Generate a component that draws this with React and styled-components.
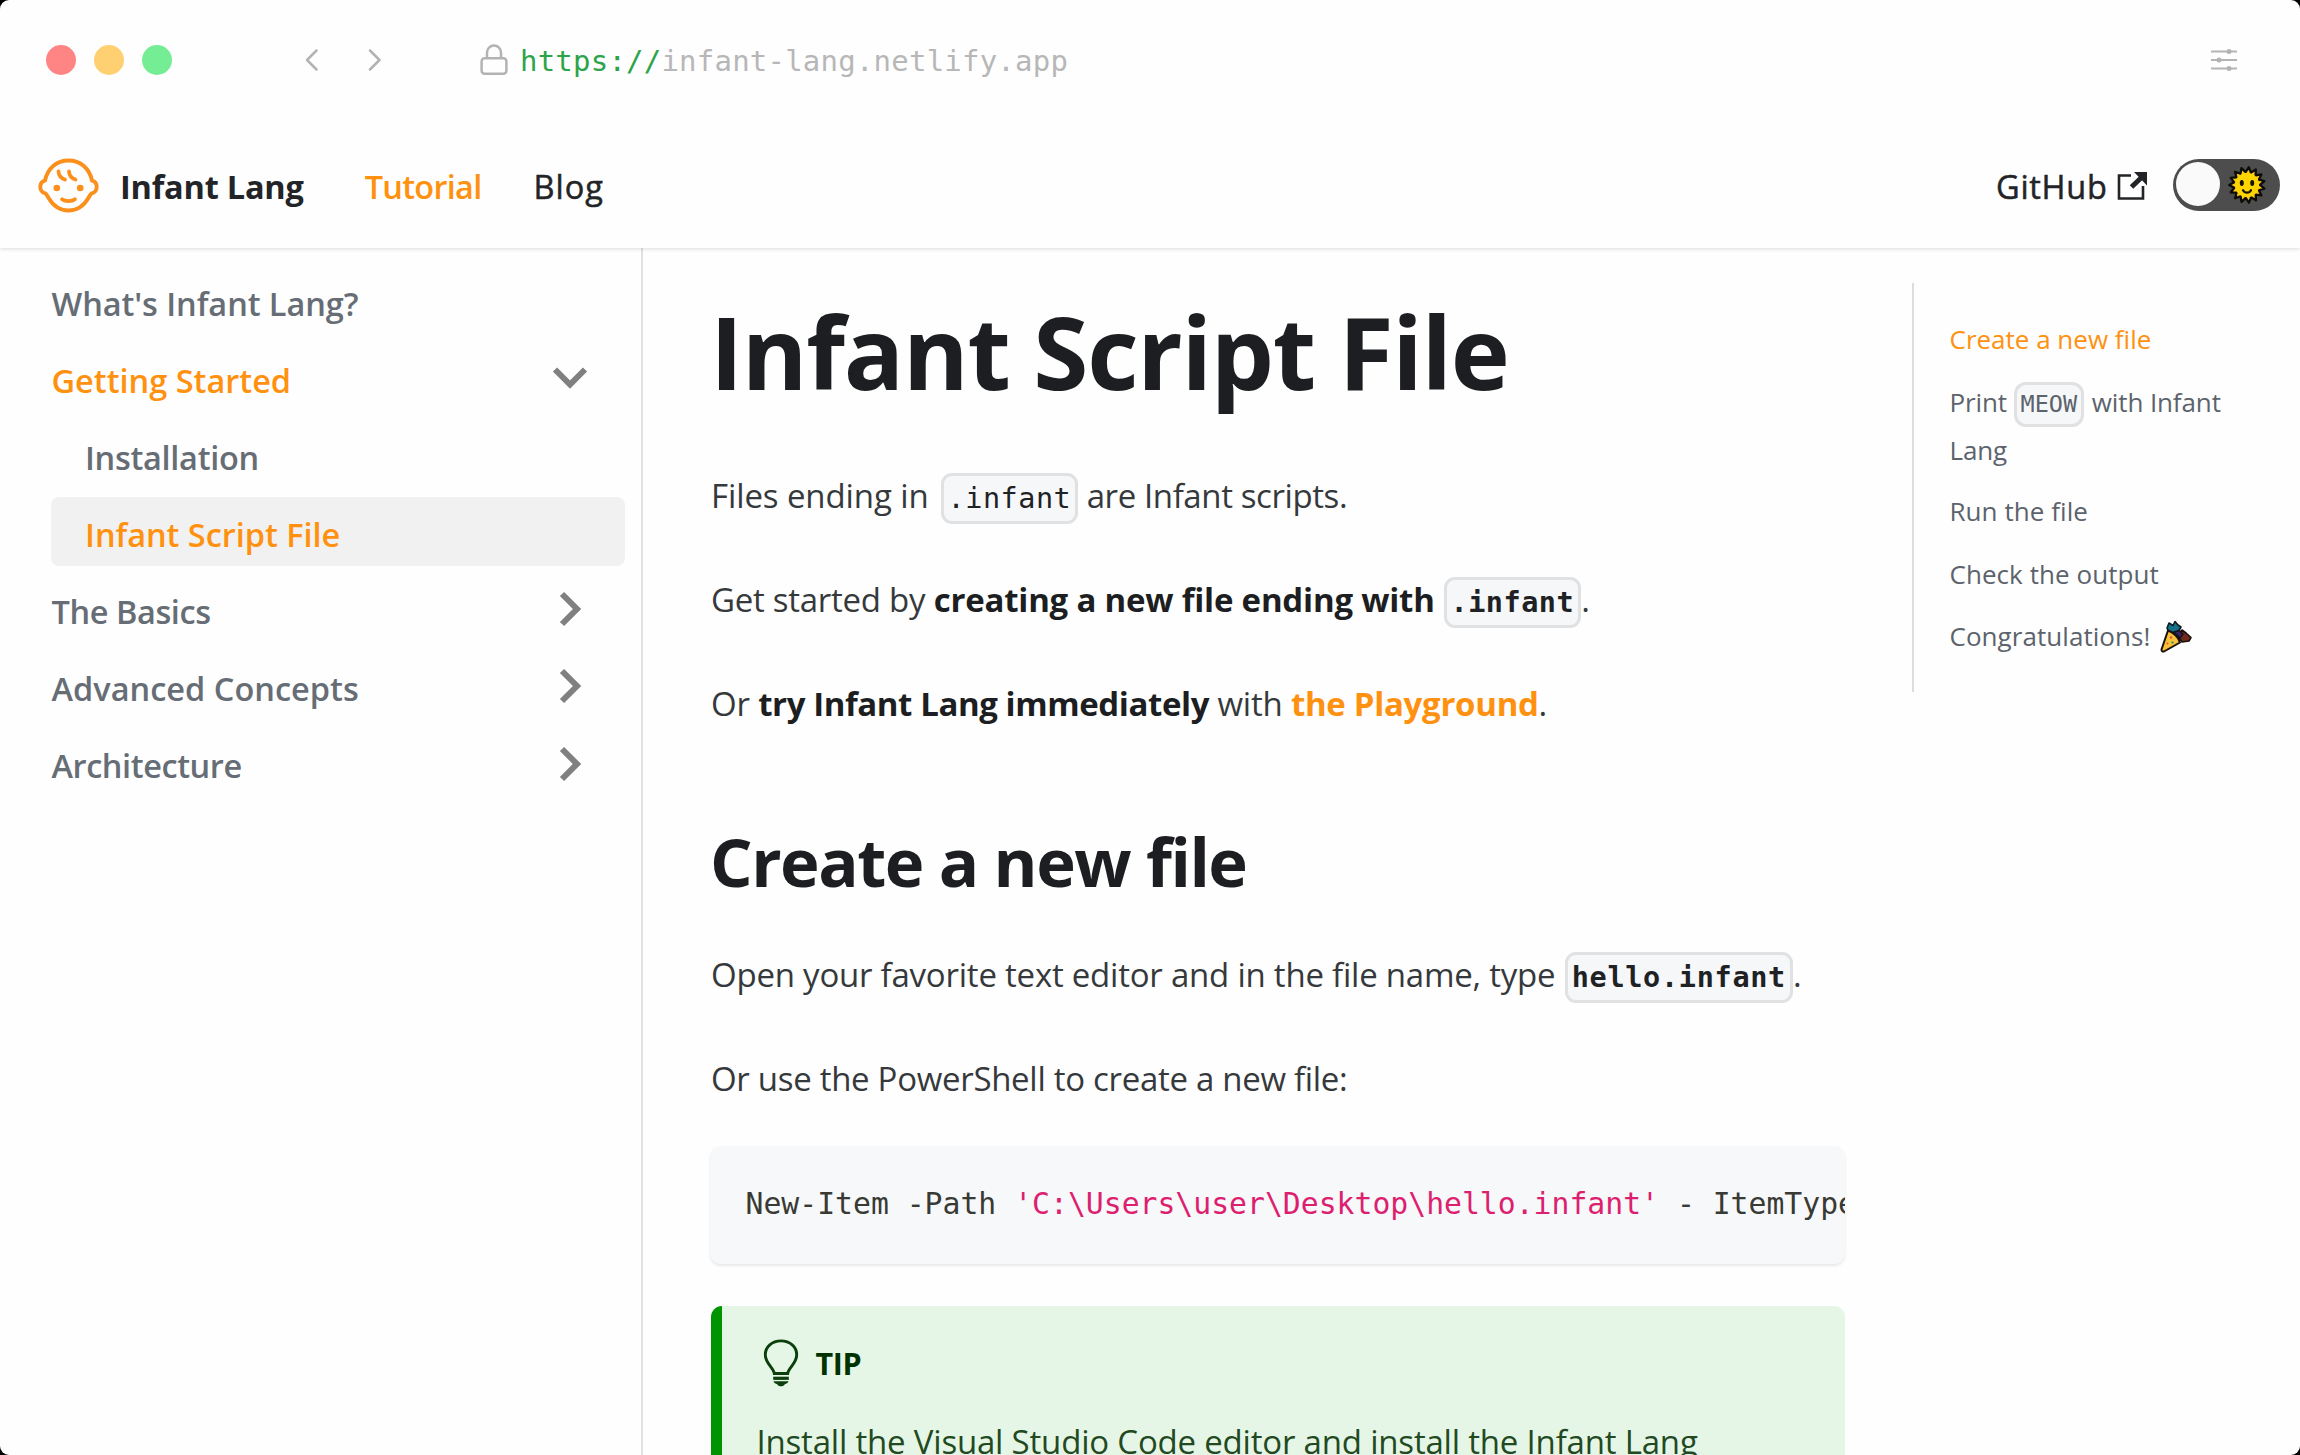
import React from "react";
import styled, { createGlobalStyle } from "styled-components";

const SANS = '"Open Sans", "Noto Sans", "Liberation Sans", sans-serif';
const MONO = '"DejaVu Sans Mono", "Liberation Mono", monospace';
const ORANGE = "#ff9110";

const GlobalStyle = createGlobalStyle`
  *, *::before, *::after { box-sizing: border-box; }
  html, body { margin: 0; background: #000; }
  h1, h2, p, ul, pre { margin: 0; padding: 0; }
  ul { list-style: none; }
  a { color: inherit; text-decoration: none; }
  svg { display: block; flex: none; }
`;

/* ---------- window ---------- */

const Window = styled.div`
  display: flex;
  flex-direction: column;
  width: 2300px;
  height: 1455px;
  overflow: hidden;
  border-radius: 9px;
  background: #fefefe;
  font-family: ${SANS};
  color: #1c1e21;
`;

const Chrome = styled.div`
  display: flex;
  align-items: center;
  height: 124px;
  padding: 0 63px 4px 46px;
`;

const Lights = styled.div`
  display: flex;
  gap: 18px;
`;

const Light = styled.span`
  width: 30px;
  height: 30px;
  border-radius: 50%;
  background: ${(p) => p.$color};
`;

const History = styled.div`
  display: flex;
  gap: 48px;
  margin-left: 132px;
`;

const Address = styled.div`
  display: flex;
  align-items: center;
  margin-left: 98px;
  font: 29px/36px ${MONO};
  letter-spacing: 0.22px;
  color: #b7b7b7;
`;

const Url = styled.span`
  margin: 2px 0 0 12px;
`;

const Scheme = styled.span`
  color: #2da44a;
`;

const Spacer = styled.div`
  flex: 1;
`;

/* ---------- navbar ---------- */

const Navbar = styled.nav`
  display: flex;
  align-items: center;
  height: 124px;
  padding: 0 20px 0 38px;
  background: #fefefe;
  box-shadow: 0 1px 4px rgba(0, 0, 0, 0.14);
  clip-path: inset(0 0 -8px 0);
`;

const NavText = styled.a`
  margin: 2px 0 0 ${(p) => p.$gap}px;
  font-size: 32.5px;
  line-height: 48px;
  font-weight: ${(p) => p.$weight || 400};
  letter-spacing: ${(p) => p.$track || 0}px;
  color: ${(p) => (p.$active ? ORANGE : "#222427")};
  -webkit-text-stroke: ${(p) => (p.$weight ? "0" : "0.5px currentColor")};
`;

const External = styled.svg`
  margin: 0 0 0 9.5px;
`;

const Toggle = styled.div`
  display: flex;
  align-items: center;
  justify-content: space-between;
  width: 107px;
  height: 52px;
  margin: -2px 0 0 25px;
  padding: 0 13px 0 3px;
  border-radius: 26px;
  background: #4d4d4d;
`;

const Knob = styled.span`
  width: 44px;
  height: 44px;
  margin-top: -2px;
  border-radius: 50%;
  background: #fafafa;
`;

/* ---------- body ---------- */

const Body = styled.div`
  display: flex;
  flex: 1;
  min-height: 0;
`;

const Sidebar = styled.aside`
  flex: none;
  width: 643px;
  padding: 18px 16px 0 51px;
  border-right: 2px solid #dfe1e4;
`;

const Menu = styled.ul`
  display: flex;
  flex-direction: column;
  gap: 8.6px;
`;

const MenuItem = styled.li`
  display: flex;
  align-items: center;
  justify-content: space-between;
  height: 68.5px;
  padding: 6.5px 38px 0 ${(p) => (p.$nested ? 34 : 0.5)}px;
  border-radius: 8px;
  background: ${(p) => (p.$current ? "#f1f1f1" : "transparent")};
  color: ${(p) => (p.$active ? ORANGE : "#666d75")};
  font-size: 32.5px;
  line-height: 48px;
  font-weight: 600;
  letter-spacing: ${(p) => p.$track}px;
`;

const CaretBox = styled.span`
  display: flex;
  justify-content: center;
  width: 34px;
  margin-top: -5px;
`;

const Article = styled.main`
  flex: none;
  width: 1134px;
  margin-left: 68px;
  padding-top: 43px;
`;

const Title = styled.h1`
  font-size: 100px;
  line-height: 120px;
  font-weight: 700;
  letter-spacing: -1.25px;
  word-spacing: -1px;
  text-indent: -1px;
`;

const Subtitle = styled.h2`
  margin-top: 89px;
  font-size: 67px;
  line-height: 80px;
  font-weight: 700;
  letter-spacing: -1.5px;
  text-indent: -1px;
`;

const Para = styled.p`
  margin-top: ${(p) => p.$top}px;
  font-size: 33px;
  line-height: 56px;
  letter-spacing: ${(p) => p.$track}px;
  white-space: nowrap;
  color: #35393c;
`;

const Phrase = styled.span`
  letter-spacing: ${(p) => p.$track}px;
`;

const Strong = styled.strong`
  font-weight: 700;
  letter-spacing: ${(p) => p.$track}px;
  color: #1c1e21;
`;

const Link = styled.a`
  font-weight: 700;
  letter-spacing: -0.3px;
  color: ${ORANGE};
`;

const Code = styled.code`
  padding: 6px 4px 6px;
  margin-left: ${(p) => p.$left || 0}px;
  border: 3px solid #dfe1e3;
  border-radius: 11px;
  background: #f6f7f9;
  font: ${(p) => (p.$bold ? 700 : 400)} 28.5px/1 ${MONO};
  letter-spacing: ${(p) => p.$track || 0.5}px;
  color: #1f2225;
`;

const CodeBlock = styled.pre`
  height: 118px;
  margin: 39px 0 0 -1px;
  padding: 38px 36px 0 35.5px;
  overflow: hidden;
  border-radius: 11px;
  background: #f6f8fa;
  box-shadow: 0 2px 3px rgba(0, 0, 0, 0.09);
  font: 29.75px/40px ${MONO};
  color: #393a34;
`;

const Quoted = styled.span`
  color: #dd1f6f;
`;

const Tip = styled.section`
  height: 240px;
  margin-top: 42px;
  padding: 32px 0 0 34.5px;
  border-left: 11px solid #009400;
  border-radius: 11px;
  background: #e6f6e6;
`;

const TipHead = styled.div`
  display: flex;
  align-items: center;
  height: 50px;
  padding-left: 6.5px;
`;

const TipLabel = styled.span`
  margin: 0 0 0 16.5px;
  font-size: 30.5px;
  line-height: 48px;
  font-weight: 700;
  letter-spacing: -0.38px;
  color: #003100;
`;

const TipText = styled.p`
  margin-top: 26px;
  font-size: 33px;
  line-height: 56px;
  letter-spacing: -0.195px;
  white-space: nowrap;
  color: #224a22;
`;

/* ---------- table of contents ---------- */

const Toc = styled.ul`
  flex: none;
  width: 360px;
  height: 409px;
  margin: 35px 0 0 67px;
  padding: 32px 0 0 35.5px;
  border-left: 2px solid #dadde1;
`;

const TocItem = styled.li`
  margin-bottom: ${(p) => p.$below || 14.5}px;
  font-size: 26px;
  line-height: 48px;
  letter-spacing: ${(p) => p.$track || 0}px;
  white-space: nowrap;
  color: ${(p) => (p.$active ? ORANGE : "#5c636c")};
`;

const TocCode = styled.code`
  padding: 5px 4px 6px;
  margin: 0 1px 0 0;
  border: 3px solid #dfe1e3;
  border-radius: 12px;
  background: #f6f7f9;
  font: 23.5px/1 ${MONO};
  letter-spacing: 0;
`;

const Popper = styled.svg`
  display: inline-block;
  margin-left: 10px;
  vertical-align: -7.5px;
`;

/* ---------- icons ---------- */

const Chevron = ({ d }) => (
  <svg width="15" height="24" viewBox="0 0 15 24" fill="none" stroke="#b3b3b3" strokeWidth="2.5" strokeLinecap="round" strokeLinejoin="round">
    <path d={d} />
  </svg>
);

const Lock = () => (
  <svg width="28" height="32" viewBox="0 0 28 32" fill="none" stroke="#b3b3b3" strokeWidth="2.5">
    <rect x="1.6" y="14.2" width="24.8" height="15.6" rx="3" />
    <path d="M7 14V8.5a7 7 0 0 1 14 0V14" />
  </svg>
);

const Sliders = () => (
  <svg width="26" height="22" viewBox="0 0 26 22" stroke="#b3b3b3" strokeWidth="2" fill="#b3b3b3">
    <path d="M0 2.5h26M0 11h26M0 19.5h26" />
    <g stroke="none">
      <circle cx="18" cy="2.5" r="2.5" />
      <circle cx="8" cy="11" r="2.5" />
      <circle cx="18" cy="19.5" r="2.5" />
    </g>
  </svg>
);

const Baby = () => (
  <svg width="62" height="58" viewBox="0 0 62 58" fill="none" stroke="#fb8f1c" strokeWidth="3.9" strokeLinejoin="round" strokeLinecap="round">
    <path d="M30.5 3.5C18.5 3.5 9.5 11.5 7 23.6C3.9 24.2 2.3 27 2.3 30S4.2 35.8 7.4 36.4C8.6 37 9.4 39 10.6 41C15 48.5 21.5 53.5 30.5 53.5S46 48.5 50.4 41C51.6 39 52.4 37 53.6 36.4C56.8 35.8 58.7 33 58.7 30S57.1 24.2 54 23.6C51.5 11.5 42.5 3.5 30.5 3.5Z" />
    <path d="M20.5 14.3C20.7 18.2 23 21.2 27 22.6M31 14.3C31.2 18.2 33.5 21.2 37.5 22.6" strokeWidth="3.7" />
    <path d="M24 42.3C27 44.7 34 44.7 37 42.3" strokeWidth="3.7" />
    <g fill="#fb8f1c" stroke="none">
      <circle cx="18.8" cy="31" r="3.3" />
      <circle cx="42.2" cy="31" r="3.3" />
    </g>
  </svg>
);

const RAYS = 15;
const sunPoints = Array.from({ length: RAYS * 2 }, (_, i) => {
  const r = i % 2 ? 13 : 17.8;
  const a = (Math.PI * i) / RAYS - Math.PI / 2 + 0.1;
  return `${(20 + r * Math.cos(a)).toFixed(2)},${(20 + r * Math.sin(a)).toFixed(2)}`;
}).join(" ");

const Sun = () => (
  <svg width="40" height="40" viewBox="0 0 40 40">
    <polygon points={sunPoints} fill="#fcc81a" stroke="#0d0c08" strokeWidth="2.3" strokeLinejoin="round" />
    <circle cx="20" cy="20" r="12" fill="#ffd500" />
    <ellipse cx="14.8" cy="18" rx="2" ry="2.9" fill="#171300" />
    <ellipse cx="25.2" cy="18" rx="2" ry="2.9" fill="#171300" />
    <path d="M16 25.2C17.8 28.5 22.2 28.5 24 25.2" fill="none" stroke="#171300" strokeWidth="2.2" strokeLinecap="round" />
  </svg>
);

const Caret = ({ open }) => (
  <CaretBox>
    {open ? (
      <svg width="36" height="24" viewBox="0 0 36 24" fill="none" stroke="#808080" strokeWidth="6">
        <path d="M3 3.5L18 18.5L33 3.5" />
      </svg>
    ) : (
      <svg width="24" height="36" viewBox="0 0 24 36" fill="none" stroke="#808080" strokeWidth="6">
        <path d="M4 3L19 18L4 33" />
      </svg>
    )}
  </CaretBox>
);

const Bulb = () => (
  <svg width="36" height="48" viewBox="0 0 36 48" fill="none" stroke="#0b3f0b" strokeWidth="2.9">
    <path d="M11.3 34.5C10.6 28.5 2.3 24.5 2.3 15.7C2.3 7.7 9 1.9 18 1.9S33.7 7.7 33.7 15.7C33.7 24.5 25.4 28.5 24.7 34.5Z" />
    <path d="M10.2 39.3H25.8" strokeWidth="3.2" />
    <path d="M10.5 42.3H25.5C25.5 44 23 44.6 21.8 45.3C20.5 48 15.5 48 14.2 45.3C13 44.6 10.5 44 10.5 42.3Z" fill="#0b3f0b" stroke="none" />
  </svg>
);

const PartyPopper = () => (
  <Popper width="34" height="34" viewBox="0 0 34 34" strokeLinejoin="round">
    <path d="M9 3L13 5.5L15 1.5L18 5L21 7L18 12L9 13L7 8Z" fill="#17708a" stroke="#0c1d22" strokeWidth="1.6" />
    <path d="M17 15L22 10L26 13L31 17.5L29 21L22 22Z" fill="#6f2a1d" stroke="#1c0e0a" strokeWidth="1.6" />
    <path d="M14 12L19 10.5L23 14L20 18Z" fill="#33265c" stroke="#15101f" strokeWidth="1.4" />
    <path d="M8 10.5C13 12 19 17.5 20 22.5L4 31.5Q1.5 32 1.5 29.5Z" fill="#f8c13c" stroke="#17120a" strokeWidth="2" />
    <circle cx="11" cy="17.5" r="1.2" fill="#e2562f" />
    <circle cx="12.5" cy="22.5" r="1.2" fill="#4a9a4a" />
    <circle cx="7.5" cy="23.5" r="1" fill="#e2562f" />
  </Popper>
);

/* ---------- page ---------- */

const MENU = [
  { label: "What's Infant Lang?", track: -0.07 },
  { label: "Getting Started", track: 0, active: true, caret: "open" },
  { label: "Installation", track: -0.3, nested: true },
  { label: "Infant Script File", track: -0.04, nested: true, active: true, current: true },
  { label: "The Basics", track: -0.42, caret: "closed" },
  { label: "Advanced Concepts", track: 0.02, caret: "closed" },
  { label: "Architecture", track: -0.43, caret: "closed" },
];

export default function App() {
  return (
    <Window>
      <GlobalStyle />
      <Chrome>
        <Lights>
          <Light $color="#ff8585" />
          <Light $color="#ffd071" />
          <Light $color="#74ed94" />
        </Lights>
        <History>
          <Chevron d="M12.5 2.5L3 12L12.5 21.5" />
          <Chevron d="M3 2.5L12.5 12L3 21.5" />
        </History>
        <Address>
          <Lock />
          <Url><Scheme>https://</Scheme>infant-lang.netlify.app</Url>
        </Address>
        <Spacer />
        <Sliders />
      </Chrome>

      <Navbar>
        <Baby />
        <NavText $gap={20} $weight={700} $track={-0.21}>Infant Lang</NavText>
        <NavText $gap={61} $weight={600} $track={-0.72} $active>Tutorial</NavText>
        <NavText $gap={52} $track={1}>Blog</NavText>
        <Spacer />
        <NavText $gap={0} $track={0.7}>GitHub</NavText>
        <External width="31" height="30" viewBox="0 0 31 30" fill="none" stroke="#222427">
          <path d="M14 4.5H2V27.5H26V15" strokeWidth="2.6" />
          <path d="M14.5 16L25 6" strokeWidth="5" />
          <path d="M17 1H30V14.5Z" fill="#222427" stroke="none" />
        </External>
        <Toggle>
          <Knob />
          <Sun />
        </Toggle>
      </Navbar>

      <Body>
        <Sidebar>
          <Menu>
            {MENU.map((m) => (
              <MenuItem key={m.label} $track={m.track} $nested={m.nested} $active={m.active} $current={m.current}>
                <a>{m.label}</a>
                {m.caret && <Caret open={m.caret === "open"} />}
              </MenuItem>
            ))}
          </Menu>
        </Sidebar>

        <Article>
          <Title>Infant Script File</Title>
          <Para $top={56.5} $track={-0.1}>
            Files ending in <Code $left={3.5}>.infant</Code>{" "}
            <Phrase $track={-0.4}>are Infant scripts.</Phrase>
          </Para>
          <Para $top={48.3} $track={-0.26}>
            Get started by <Strong $track={-0.21}>creating a new file ending with <Code $bold $left={0.5}>.infant</Code></Strong>.
          </Para>
          <Para $top={48.3} $track={-0.2}>
            Or <Strong $track={-0.41}>try Infant Lang immediately</Strong> with <Link>the Playground</Link>.
          </Para>
          <Subtitle>Create a new file</Subtitle>
          <Para $top={46} $track={-0.226}>
            Open your favorite text editor and in the file name, type <Code $bold $left={1} $track={0.7}>hello.infant</Code>.
          </Para>
          <Para $top={47.5} $track={-0.3}>Or use the PowerShell to create a new file:</Para>
          <CodeBlock>
            New-Item -Path <Quoted>'C:\Users\user\Desktop\hello.infant'</Quoted> - ItemType File
          </CodeBlock>
          <Tip>
            <TipHead>
              <Bulb />
              <TipLabel>TIP</TipLabel>
            </TipHead>
            <TipText>Install the Visual Studio Code editor and install the Infant Lang</TipText>
          </Tip>
        </Article>

        <Toc>
          <TocItem $active>Create a new file</TocItem>
          <TocItem $track={-0.12} $below={13.5}>
            Print <TocCode>MEOW</TocCode> with Infant<br />Lang
          </TocItem>
          <TocItem $track={0.06}>Run the file</TocItem>
          <TocItem $track={0.06}>Check the output</TocItem>
          <TocItem $track={0.05}>Congratulations!<PartyPopper /></TocItem>
        </Toc>
      </Body>
    </Window>
  );
}
